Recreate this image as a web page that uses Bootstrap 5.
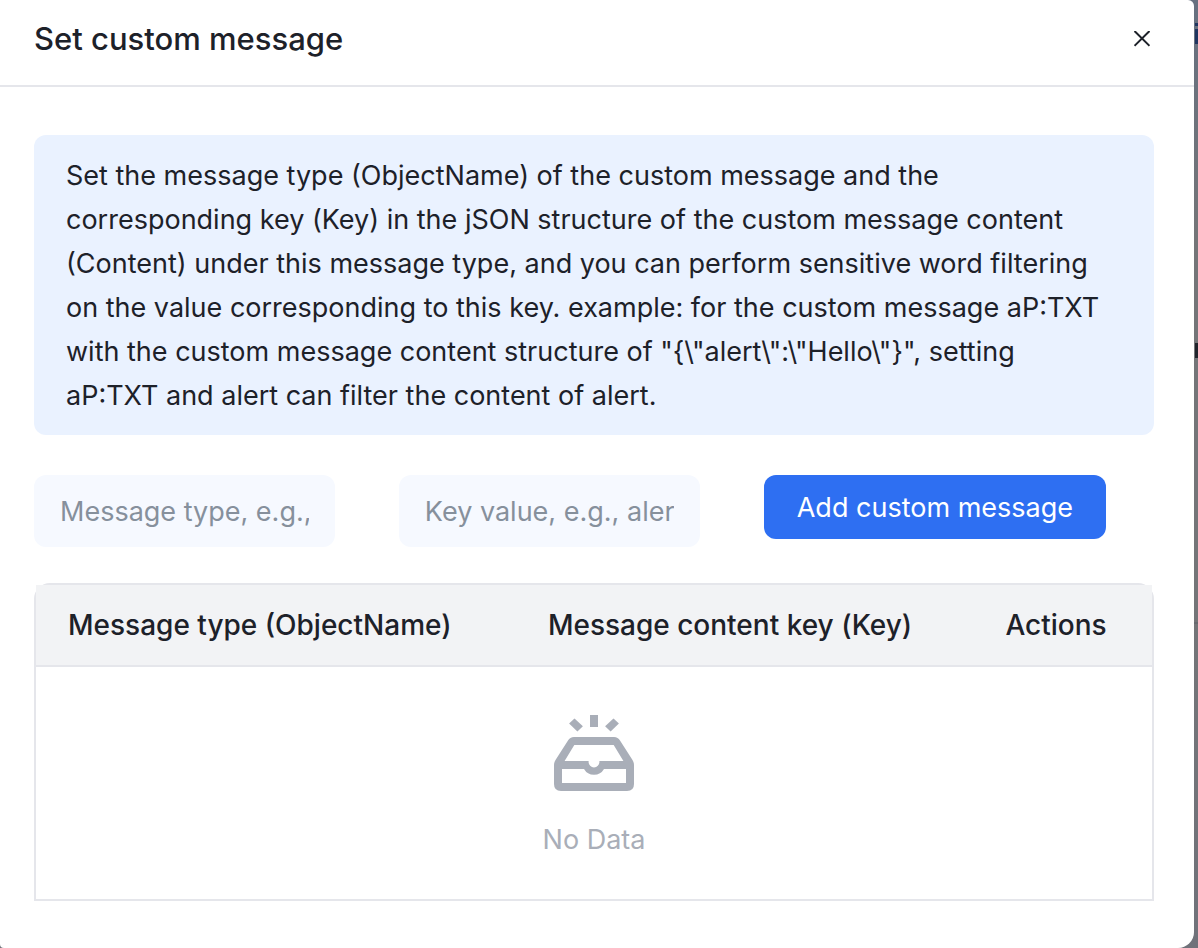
<!DOCTYPE html>
<html lang="en">
<head>
<meta charset="utf-8">
<meta name="viewport" content="width=device-width, initial-scale=1">
<title>Set custom message</title>
<link href="https://cdn.jsdelivr.net/npm/bootstrap@5.3.0/dist/css/bootstrap.min.css" rel="stylesheet">
<style>
  body { font-family: Inter, "Liberation Sans", sans-serif; font-size: 27px; line-height: 44px; color: #1d2129; background: linear-gradient(#667080, #747578 240px, #747578 600px, #70727a); overflow: hidden; }
  .behind { top: 0; right: 0; width: 4px; height: 100%; overflow: hidden; }
  .behind i { position: absolute; right: 0; }
  .dialog-panel { margin-right: 4px; min-height: 100vh; background: #fff; border-radius: 0 6px 16px 4px; }
  .dialog-head { height: 87px; padding: 0 34px 8px; border-bottom: 2px solid #e5e6eb; }
  .dialog-title { font-size: 31px; line-height: 40px; font-weight: 500; }
  .close-btn { width: 36px; height: 36px; }
  .dialog-content { padding: 48px 40px 0 34px; }
  .notice { padding: 19px 44px 17px 32px; background: #eaf2ff; border-radius: 12px; }
  .form-line { gap: 64px; margin-top: 40px; padding-right: 48px; }
  .form-line .form-control { flex: 1 1 0; width: 0; height: 72px; padding: 0 26px; font-size: 27px; background: #f6f9ff; border-radius: 12px; color: #1d2129; }
  .form-line .form-control::placeholder { color: #86909c; opacity: 1; }
  .add-btn { padding: 13px 33px 11px; font-size: 27px; line-height: 40px; color: #fff; background: #2e6ff2; border-radius: 12px; }
  .add-btn:hover { color: #fff; background: #1f5fe0; }
  .table-frame { margin-top: 36px; border: 2px solid #e5e6eb; border-radius: 16px 16px 0 0; }
  .key-table { table-layout: fixed; }
  .key-table th { height: 81px; padding: 0 32px; font-size: 28px; line-height: 40px; font-weight: 500; white-space: nowrap; vertical-align: middle; color: #1d2129; background: #f2f3f5; border-bottom: 2px solid #e5e6eb; }
  .key-table td { padding: 48px 0 37px; border: 0; color: #a9aeb8; }
  .c-type { width: 43%; } .c-key { width: 41%; }
  .empty-label { margin-top: 27px; }
</style>
</head>
<body>
<div class="behind position-absolute" aria-hidden="true">
  <i style="top:23px;width:3px;height:3px;background:#1f3560"></i>
  <i style="top:29px;width:3px;height:15px;background:#1f3560"></i>
  <i style="top:343px;width:3px;height:15px;background:#20242c"></i>
  <i style="top:622px;width:4px;height:2px;background:#686a70"></i>
</div>
<main class="dialog-panel" role="dialog" aria-labelledby="dlg-title">
  <header class="dialog-head d-flex align-items-center justify-content-between">
    <h1 class="dialog-title m-0" id="dlg-title">Set custom message</h1>
    <button type="button" class="close-btn btn p-0 border-0 d-flex align-items-center justify-content-center" aria-label="Close">
      <svg width="16" height="16" viewBox="0 0 16 16" fill="none" stroke="#1d2129" stroke-width="2"><path d="M.5 0l15 14.8M15.500 0L.5 14.8"/></svg>
    </button>
  </header>
  <div class="dialog-content">
    <p class="notice mb-0">Set the message type (ObjectName) of the custom message and the corresponding key (Key) in the jSON structure of the custom message content (Content) under this message type, and you can perform sensitive word filtering on the value corresponding to this key. example: for the custom message aP:TXT with the custom message content structure of "{\"alert\":\"Hello\"}", setting aP:TXT and alert can filter the content of alert.</p>
    <form class="form-line d-flex align-items-start">
      <input class="form-control border-0" type="text" aria-label="Message type" placeholder="Message type, e.g., aP:TXT">
      <input class="form-control border-0" type="text" aria-label="Key value" placeholder="Key value, e.g., alert">
      <button type="button" class="add-btn btn border-0 text-nowrap">Add custom message</button>
    </form>
    <div class="table-frame">
      <table class="key-table table mb-0">
        <thead><tr><th class="c-type" scope="col">Message type (ObjectName)</th><th class="c-key" scope="col">Message content key (Key)</th><th scope="col">Actions</th></tr></thead>
        <tbody><tr><td colspan="3" class="text-center">
          <svg class="d-block mx-auto" width="80" height="76" viewBox="0 0 80 76" fill="#a9aeb8"><path d="M36 0h8v12h-8zM20.500 3.400L28.900 11.300 23.400 16.500 15.100 8.600zM59.500 3.400L51.100 11.300 56.600 16.500 64.900 8.600z"/><path fill-rule="evenodd" d="M20 22H60Q64 22 66 25.500L78.500 45Q80 47.500 80 50V69Q80 76 73 76H7Q0 76 0 69V50Q0 47.500 1.500 45L14 25.500Q16 22 20 22ZM20.300 30L10.600 46H34.600V47A5.400 5.400 0 0 0 45.400 47V46H69.400L59.700 30ZM8 54V68H72V54H50A11.500 11.500 0 0 1 30 54Z"/></svg>
          <div class="empty-label">No Data</div>
        </td></tr></tbody>
      </table>
    </div>
  </div>
</main>
<script src="https://cdn.jsdelivr.net/npm/bootstrap@5.3.0/dist/js/bootstrap.bundle.min.js"></script>
</body>
</html>
